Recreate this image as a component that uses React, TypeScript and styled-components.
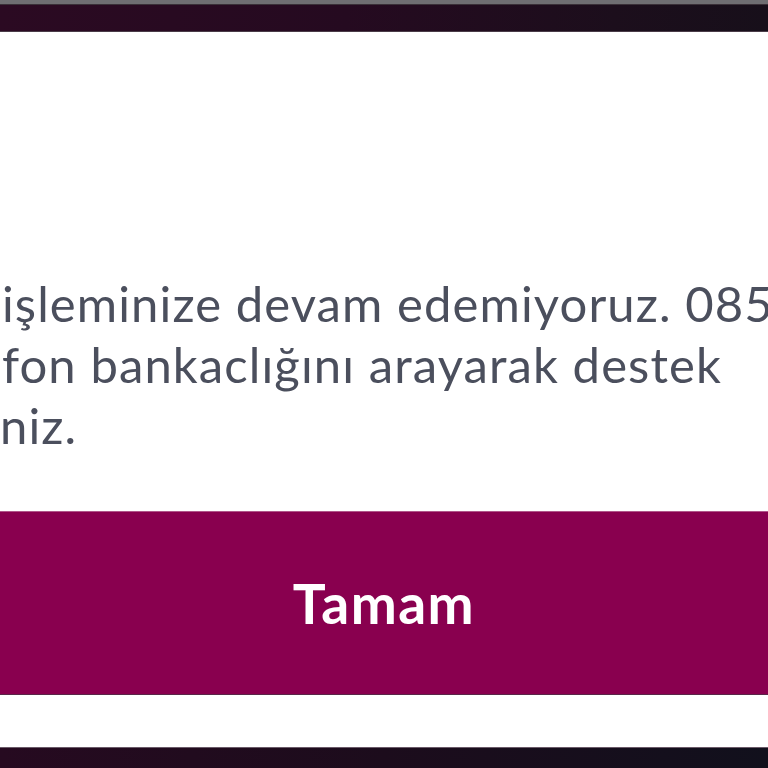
import styled, { createGlobalStyle } from "styled-components";

const GlobalStyle = createGlobalStyle`
  html, body {
    margin: 0;
    padding: 0;
    background: #1a0e1c;
  }
  * {
    box-sizing: border-box;
  }
`;

const Page = styled.div`
  display: flex;
  flex-direction: column;
  width: 768px;
  height: 768px;
  overflow: hidden;
  font-family: Lato, "Noto Sans", sans-serif;
`;

const StatusStrip = styled.div`
  height: 5px;
  background: #6f6e72;
  border-bottom: 1px solid #3a3038;
`;

const TopBand = styled.div`
  height: 27px;
  background: linear-gradient(90deg, #2b0a22 0%, #250a20 45%, #1c0e1c 80%, #170f1a 100%);
  border-bottom: 1px solid #4a3c48;
`;

const Sheet = styled.div`
  flex: 1;
  display: flex;
  flex-direction: column;
  background: #ffffff;
`;

const Message = styled.div`
  padding-top: 241px;
  color: #4b4f5d;
  font-size: 49px;
  line-height: 61px;
  letter-spacing: 1.1px;
`;

const Line = styled.div<{ $shift?: number }>`
  white-space: nowrap;
  overflow: hidden;
  padding-left: ${(p) => p.$shift ?? 2}px;
`;

const OkButton = styled.button`
  margin-top: 55px;
  height: 184px;
  width: 100%;
  border: none;
  border-top: 1px solid #b0568a;
  border-bottom: 1px solid #5a2648;
  background: #89004f;
  color: #ffffff;
  font-family: Lato, "Noto Sans", sans-serif;
  font-weight: 700;
  font-size: 55px;
  letter-spacing: 1.5px;
  cursor: pointer;
`;

const BottomBand = styled.div`
  height: 21px;
  border-top: 1px solid #6a5a68;
  background: linear-gradient(90deg, #260a20 0%, #1c0c1c 50%, #11101c 100%);
`;

export default function App() {
  return (
    <>
      <GlobalStyle />
      <Page>
        <StatusStrip />
        <TopBand />
        <Sheet>
          <Message>
            <Line>işleminize devam edemiyoruz. 0850</Line>
            <Line>fon bankaclığını arayarak destek</Line>
            <Line $shift={-3}>niz.</Line>
          </Message>
          <OkButton type="button">Tamam</OkButton>
        </Sheet>
        <BottomBand />
      </Page>
    </>
  );
}
